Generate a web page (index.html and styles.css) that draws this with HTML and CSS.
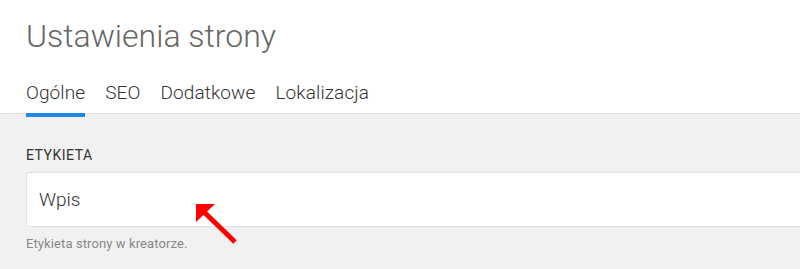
FILE: index.html
```html
<!DOCTYPE html>
<html lang="pl">
<head>
<meta charset="utf-8">
<title>Ustawienia strony</title>
<link rel="stylesheet" href="styles.css">
</head>
<body>
<div class="page">
  <header class="header">
    <h1 class="title">Ustawienia strony</h1>
    <nav class="tabs">
      <span class="tab active">Ogólne</span>
      <span class="tab">SEO</span>
      <span class="tab">Dodatkowe</span>
      <span class="tab">Lokalizacja</span>
    </nav>
  </header>
  <main class="content">
    <div class="field">
      <label class="label">ETYKIETA</label>
      <div class="input">Wpis</div>
      <p class="help">Etykieta strony w kreatorze.</p>
    </div>
    <svg class="arrow" width="50" height="50" viewBox="0 0 50 50">
      <polygon points="1,1 20,1 1,19" fill="#ff0000"/>
      <line x1="8" y1="8" x2="40" y2="39" stroke="#ff0000" stroke-width="5"/>
    </svg>
  </main>
</div>
</body>
</html>
```
FILE: styles.css
```css
* { box-sizing: border-box; }
html, body { margin: 0; padding: 0; }
body {
  width: 800px;
  height: 269px;
  overflow: hidden;
  background: #fff;
  font-family: Roboto, "Liberation Sans", sans-serif;
}
.page { width: 800px; overflow: hidden; }
.header {
  position: relative;
  z-index: 1;
  padding: 17px 0 0 26px;
  background: #fff;
}
.title {
  margin: 0;
  font-size: 32px;
  font-weight: 300;
  color: #666;
  line-height: 38px;
}
.tabs {
  display: flex;
  gap: 20px;
  margin-top: 20px;
}
.tab {
  font-size: 19px;
  font-weight: 300;
  letter-spacing: 0.1px;
  color: #333;
  line-height: 22px;
  padding: 7px 0 9px;
  border-bottom: 4px solid transparent;
  margin-bottom: -4px;
}
.tab.active { border-bottom-color: #1e88e5; }
.content {
  position: relative;
  overflow: hidden;
  background: #f1f1f1;
  border-top: 1px solid #e2e2e2;
  height: 160px;
  padding: 33px 0 0 26px;
}
.field { display: flex; flex-direction: column; }
.label {
  font-size: 14px;
  color: #333;
  line-height: 16px;
  letter-spacing: 0.5px;
  margin-bottom: 9px;
}
.input {
  width: calc(100% + 40px);
  height: 55px;
  background: #fff;
  border: 1px solid #e0e0e0;
  border-radius: 3px;
  padding: 0 12px;
  font-size: 19px;
  font-weight: 300;
  color: #333;
  line-height: 53px;
}
.help {
  margin: 9px 0 0;
  font-size: 13px;
  letter-spacing: 0.1px;
  color: #888;
  line-height: 16px;
}
.arrow {
  position: absolute;
  left: 195px;
  top: 89px;
}
```
